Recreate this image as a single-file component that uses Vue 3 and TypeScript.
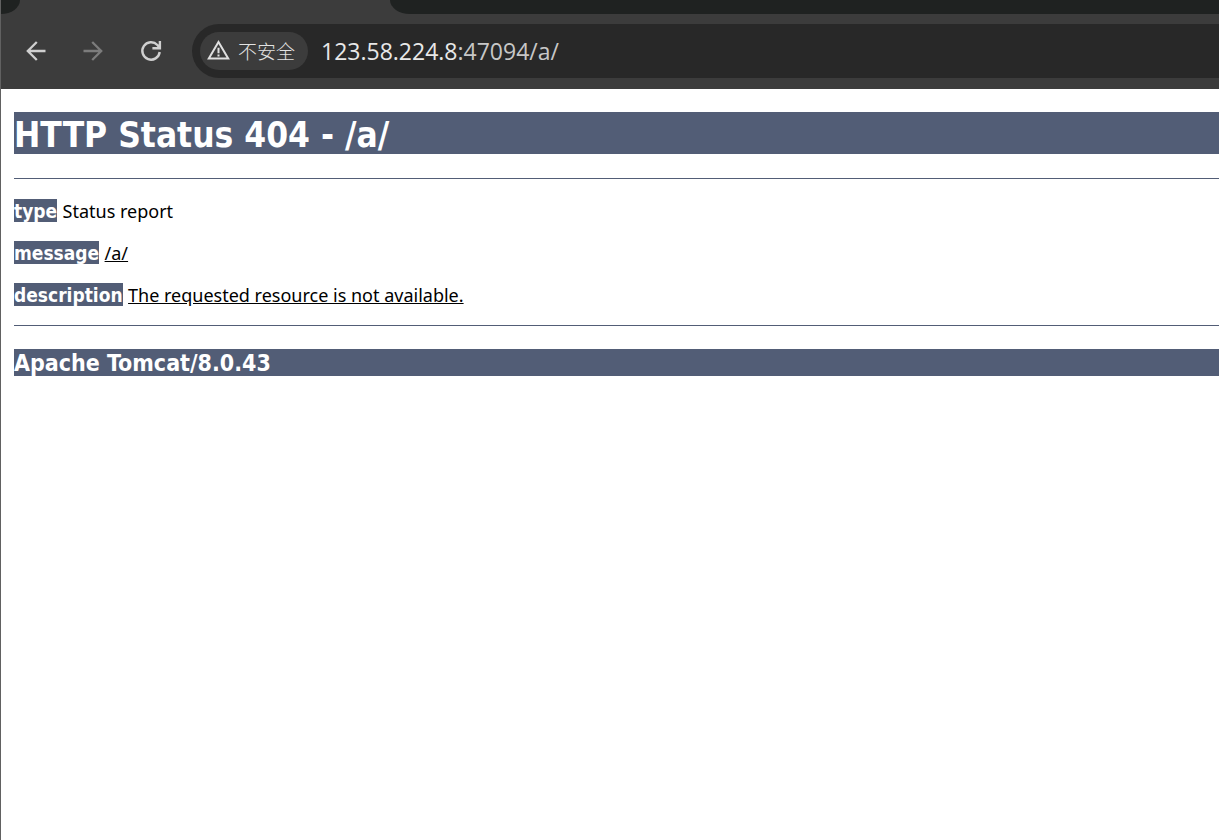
<script setup lang="ts">
import { ref } from 'vue'

interface Detail {
  label: string
  value: string
  underlined: boolean
}

const host = '123.58.224.8'
const rest = ':47094/a/'
const security = ref('不安全')

const details: Detail[] = [
  { label: 'type', value: 'Status report', underlined: false },
  { label: 'message', value: '/a/', underlined: true },
  { label: 'description', value: 'The requested resource is not available.', underlined: true },
]
</script>

<template>
  <div class="window">
    <header class="chrome">
      <div class="tabs">
        <div class="tab-before"></div>
        <div class="tab-after"></div>
      </div>
      <nav class="toolbar">
        <button class="nav" type="button" aria-label="Back">
          <svg width="24" height="24" viewBox="0 0 24 24" fill="none" stroke="#cfcfcf" stroke-width="2.3">
            <path d="M21.5 12H4M12.8 3L3.8 12L12.8 21" />
          </svg>
        </button>
        <button class="nav" type="button" aria-label="Forward" disabled>
          <svg width="24" height="24" viewBox="0 0 24 24" fill="none" stroke="#7c7c7c" stroke-width="2.3">
            <path d="M2.5 12H20M11.2 3L20.2 12L11.2 21" />
          </svg>
        </button>
        <button class="nav" type="button" aria-label="Reload">
          <svg width="24" height="24" viewBox="0 0 24 24" fill="none" stroke="#cfcfcf" stroke-width="2.4">
            <path d="M21.7 13A8.7 8.7 0 1 1 19.4 6L21.4 8.4M21.9 2V9.2H14.4" />
          </svg>
        </button>
        <div class="address">
          <button class="chip" type="button">
            <svg width="24" height="22" viewBox="0 0 24 22" fill="none" stroke="#e0e0e0" stroke-width="2">
              <path d="M11.5 2L21.2 18.6H1.8Z" />
              <path d="M11.5 7.8V13.2M11.5 14.6V16.6" />
            </svg>
            <span>{{ security }}</span>
          </button>
          <a class="url" href="#"><span class="host">{{ host }}</span>{{ rest }}</a>
        </div>
      </nav>
    </header>
    <main class="page">
      <h1>HTTP Status 404 - /a/</h1>
      <hr />
      <p v-for="d in details" :key="d.label">
        <b>{{ d.label }}</b>{{ ' ' }}<u v-if="d.underlined">{{ d.value }}</u><span v-else>{{ d.value }}</span>
      </p>
      <hr />
      <h3>Apache Tomcat/8.0.43</h3>
    </main>
  </div>
</template>

<style>
body {
  margin: 0;
  background: #fff;
}
</style>

<style scoped>
.window {
  box-sizing: border-box;
  min-height: 100vh;
  border-left: 1px solid #616161;
  background: #fff;
  overflow: hidden;
}
.chrome {
  background: #3c3c3c;
}
.tabs {
  display: flex;
  justify-content: space-between;
  height: 14px;
}
.tab-before {
  width: 19px;
  background: #1f2221;
  border-bottom-right-radius: 19px 14px;
}
.tab-after {
  flex: 1;
  margin-left: 370px;
  background: #1f2221;
  border-bottom-left-radius: 20px 14px;
}
.toolbar {
  display: flex;
  align-items: center;
  padding: 10px 0 11px 18px;
}
.nav {
  width: 34px;
  height: 34px;
  margin-right: 23px;
  padding: 0;
  border: 0;
  background: none;
  display: flex;
  align-items: center;
  justify-content: center;
}
.address {
  flex: 1;
  display: flex;
  align-items: center;
  height: 54px;
  margin-left: 2px;
  padding-left: 8px;
  gap: 13px;
  background: #282828;
  border-radius: 27px 0 0 27px;
}
.chip {
  display: flex;
  align-items: center;
  gap: 7px;
  height: 38px;
  padding: 0 13px 0 7px;
  border: 0;
  border-radius: 19px;
  background: #3c3c3c;
  color: #e3e3e3;
  font: 300 19px/38px "Noto Sans CJK SC", sans-serif;
  white-space: nowrap;
}
.url {
  color: #c7c7c7;
  font: 23px/38px "Open Sans", "Noto Sans", sans-serif;
  text-decoration: none;
  white-space: nowrap;
}
.host {
  color: #e8e8e8;
}
.page {
  padding: 23px 0 0 13px;
  color: #000;
  font: 19px/21px "DejaVu Sans Condensed", "DejaVu Sans", sans-serif;
}
h1,
h3 {
  margin: 0;
  padding-top: 2px;
  background: #525d76;
  color: #fff;
  font-weight: bold;
}
h1 {
  padding-top: 4px;
  font-size: 35px;
  line-height: 38px;
  margin-bottom: 24px;
}
h3 {
  font-size: 23px;
  line-height: 25px;
  margin-top: 23px;
}
hr {
  height: 1px;
  margin: 0 0 20px;
  border: 0;
  background: #525d76;
}
p {
  margin: 19px 0;
}
b {
  display: inline-block;
  padding-top: 2px;
  background: #525d76;
  color: #fff;
}
u,
p span {
  font-family: "Noto Sans", sans-serif;
  font-size: 18px;
  line-height: 18px;
}
</style>
